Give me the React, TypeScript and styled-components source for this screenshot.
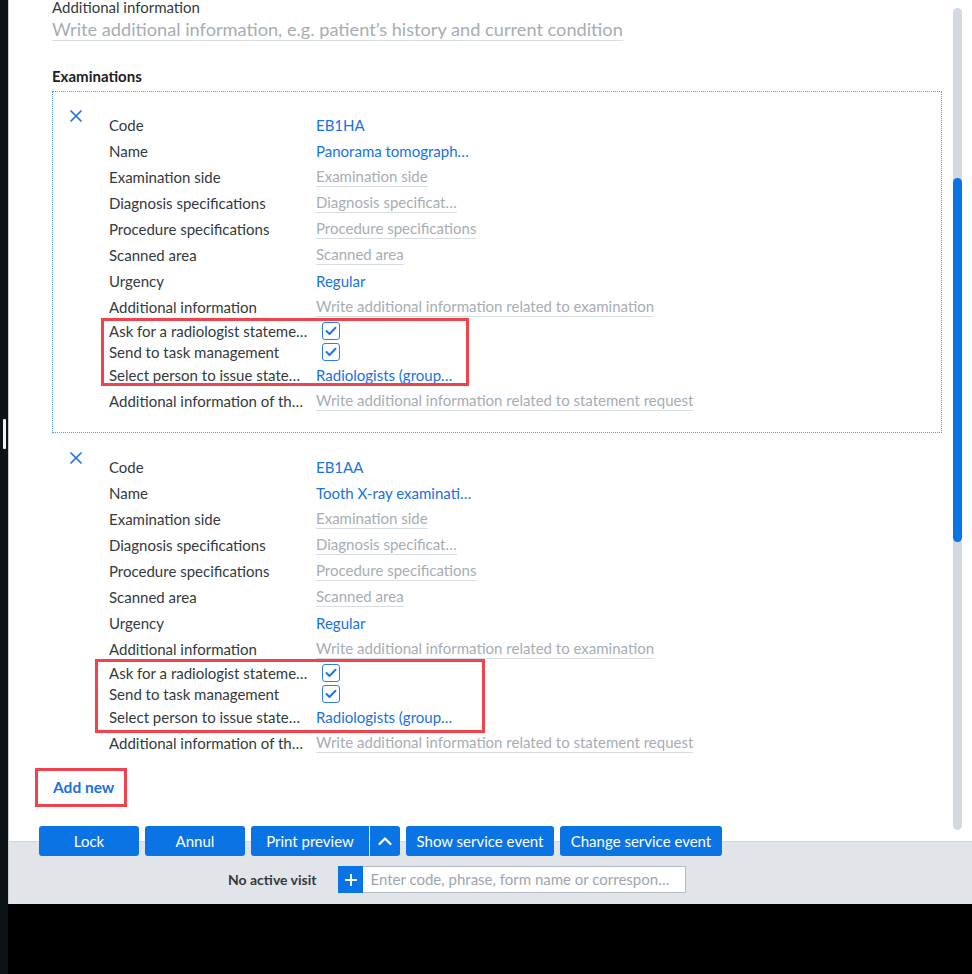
import React from "react";
import styled, { createGlobalStyle } from "styled-components";

const GlobalStyle = createGlobalStyle`
  html, body {
    margin: 0;
    padding: 0;
    background: #000;
  }
  body {
    font-family: "Segoe UI", Lato, "Noto Sans", sans-serif;
    -webkit-font-smoothing: antialiased;
  }
`;

const BLUE = "#0b74e5";
const LINK = "#1872e2";
const LABEL = "#333a40";
const PLACEHOLDER = "#a7adb4";
const UNDERLINE = "#d8dde2";

const Screen = styled.div`
  display: flex;
  align-items: flex-start;
  width: 972px;
  height: 974px;
  background: #000;
  overflow: hidden;
`;

const Rail = styled.div`
  width: 8px;
  height: 974px;
  box-sizing: border-box;
  padding-top: 419px;
  background: #0d1216;
  display: flex;
  justify-content: center;
`;

const RailHandle = styled.div`
  width: 3px;
  height: 30px;
  background: #f2f2f2;
  border-radius: 1px;
`;

const Window = styled.div`
  width: 964px;
  height: 904px;
  box-sizing: border-box;
  border-left: 1px solid #c9ced3;
  background: #fff;
  display: flex;
  flex-direction: column;
`;

const Content = styled.div`
  flex: 1;
  position: relative;
  overflow: hidden;
  padding: 0 30px 0 43px;
`;

const Inner = styled.div`
  margin-top: -3px;
`;

const FieldLabel = styled.div`
  font-size: 15px;
  line-height: 20px;
  color: ${LABEL};
`;

const BigPlaceholder = styled.div`
  display: inline-block;
  margin-top: 2px;
  font-size: 18.2px;
  line-height: 21px;
  color: ${PLACEHOLDER};
  border-bottom: 1px solid ${UNDERLINE};
`;

const SectionTitle = styled.div`
  margin: 25px 0 5px;
  font-size: 15px;
  line-height: 20px;
  font-weight: 700;
  color: #1d2125;
`;

const Card = styled.div<{ $active?: boolean }>`
  display: flex;
  padding: 20px 0 18px 17px;
  border: 1px dotted ${(p) => (p.$active ? "#4d9cf0" : "transparent")};
`;

const Close = styled.svg`
  flex: none;
  width: 12px;
  height: 12px;
  margin: -2px 27px 0 0;
`;

const Rows = styled.div`
  flex: 1;
  display: flex;
  flex-direction: column;
`;

const Row = styled.div<{ $h?: number }>`
  display: grid;
  grid-template-columns: 207px 1fr;
  align-items: center;
  height: ${(p) => p.$h ?? 26}px;
`;

const Label = styled.div`
  font-size: 15px;
  color: ${LABEL};
  white-space: nowrap;
  overflow: hidden;
`;

const Link = styled.div`
  font-size: 15px;
  color: ${LINK};
  white-space: nowrap;
`;

const Placeholder = styled.div`
  justify-self: start;
  font-size: 15px;
  line-height: 19px;
  color: ${PLACEHOLDER};
  border-bottom: 1px solid ${UNDERLINE};
  white-space: nowrap;
`;

const Check = styled.div`
  width: 18px;
  height: 18px;
  margin-left: 6px;
  box-sizing: border-box;
  border: 1.5px solid #2d7fe6;
  border-radius: 3px;
  background: #fff;
  display: flex;
  align-items: center;
  justify-content: center;
`;

const Group = styled.div`
  position: relative;
`;

const Mark = styled.div<{ $l: number; $t: number; $w: number; $h: number }>`
  position: absolute;
  left: ${(p) => p.$l}px;
  top: ${(p) => p.$t}px;
  width: ${(p) => p.$w}px;
  height: ${(p) => p.$h}px;
  box-sizing: border-box;
  border: 3px solid #f1434b;
  pointer-events: none;
`;

const AddWrap = styled.div`
  position: relative;
  display: inline-block;
  margin: 2px 0 0 1px;
`;

const AddNew = styled.div`
  font-size: 15.5px;
  line-height: 20px;
  font-weight: 700;
  color: ${LINK};
`;

const Track = styled.div`
  position: absolute;
  top: 8px;
  right: 10px;
  width: 9px;
  height: 822px;
  border-radius: 5px;
  background: #d2d9e0;
`;

const Thumb = styled.div`
  position: absolute;
  left: 0;
  right: 0;
  top: 170px;
  height: 364px;
  border-radius: 5px;
  background: ${BLUE};
`;

const Footer = styled.div`
  background: #e1e5e9;
  border-top: 1px solid #cfd5db;
  padding: 0 0 11px 30px;
`;

const ButtonRow = styled.div`
  position: relative;
  z-index: 1;
  display: flex;
  gap: 6px;
  margin-top: -16px;
`;

const Split = styled.div`
  display: flex;
  gap: 1px;
`;

const Button = styled.button<{ $w: number; $side?: "left" | "right" }>`
  width: ${(p) => p.$w}px;
  height: 30px;
  padding: 0;
  border: none;
  border-radius: ${(p) =>
    p.$side === "left" ? "3px 0 0 3px" : p.$side === "right" ? "0 3px 3px 0" : "3px"};
  background: ${BLUE};
  color: #fff;
  font-family: inherit;
  font-size: 15px;
  display: flex;
  align-items: center;
  justify-content: center;
  cursor: pointer;
`;

const VisitRow = styled.div`
  display: flex;
  align-items: center;
  height: 27px;
  margin-top: 10px;
  padding-left: 189px;
`;

const VisitText = styled.div`
  font-size: 14px;
  font-weight: 700;
  color: #34393e;
`;

const Search = styled.div`
  display: flex;
  width: 348px;
  height: 27px;
  margin-left: 22px;
`;

const PlusBox = styled.div`
  width: 25px;
  background: ${BLUE};
  display: flex;
  align-items: center;
  justify-content: center;
`;

const SearchField = styled.div`
  flex: 1;
  box-sizing: border-box;
  padding-left: 7px;
  background: #fff;
  border: 1px solid #b4bbc2;
  border-left: none;
  font-size: 15px;
  line-height: 25px;
  color: #a0a6ad;
  white-space: nowrap;
  overflow: hidden;
`;

type Field =
  | { label: string; kind: "link"; value: string }
  | { label: string; kind: "ph"; value: string }
  | { label: string; kind: "check" };

type Exam = {
  code: string;
  name: string;
  active?: boolean;
  mark: { l: number; t: number; w: number; h: number };
};

const exams: Exam[] = [
  { code: "EB1HA", name: "Panorama tomograph…", active: true, mark: { l: -8, t: -2, w: 368, h: 68 } },
  { code: "EB1AA", name: "Tooth X-ray examinati…", mark: { l: -14, t: -3, w: 390, h: 74 } },
];

const topFields = (e: Exam): Field[] => [
  { label: "Code", kind: "link", value: e.code },
  { label: "Name", kind: "link", value: e.name },
  { label: "Examination side", kind: "ph", value: "Examination side" },
  { label: "Diagnosis specifications", kind: "ph", value: "Diagnosis specificat…" },
  { label: "Procedure specifications", kind: "ph", value: "Procedure specifications" },
  { label: "Scanned area", kind: "ph", value: "Scanned area" },
  { label: "Urgency", kind: "link", value: "Regular" },
  { label: "Additional information", kind: "ph", value: "Write additional information related to examination" },
];

const statementFields: Field[] = [
  { label: "Ask for a radiologist stateme…", kind: "check" },
  { label: "Send to task management", kind: "check" },
  { label: "Select person to issue state…", kind: "link", value: "Radiologists (group…" },
];

const lastField: Field = {
  label: "Additional information of th…",
  kind: "ph",
  value: "Write additional information related to statement request",
};

const CheckIcon = () => (
  <svg width="12" height="10" viewBox="0 0 12 10">
    <path d="M1.5 5l3 3L10.5 1.8" fill="none" stroke="#1f78e6" strokeWidth="2" strokeLinecap="round" strokeLinejoin="round" />
  </svg>
);

const FieldRow = ({ f }: { f: Field }) => (
  <Row $h={f.kind === "check" ? 21 : 26}>
    <Label>{f.label}</Label>
    {f.kind === "link" && <Link>{f.value}</Link>}
    {f.kind === "ph" && <Placeholder>{f.value}</Placeholder>}
    {f.kind === "check" && (
      <Check>
        <CheckIcon />
      </Check>
    )}
  </Row>
);

const ExamCard = ({ exam }: { exam: Exam }) => (
  <Card $active={exam.active}>
    <Close viewBox="0 0 12 12">
      <path d="M1 1L11 11M11 1L1 11" stroke="#1a73e8" strokeWidth="1.7" strokeLinecap="round" />
    </Close>
    <Rows>
      {topFields(exam).map((f) => (
        <FieldRow key={f.label} f={f} />
      ))}
      <Group>
        {statementFields.map((f) => (
          <FieldRow key={f.label} f={f} />
        ))}
        <Mark $l={exam.mark.l} $t={exam.mark.t} $w={exam.mark.w} $h={exam.mark.h} />
      </Group>
      <FieldRow f={lastField} />
    </Rows>
  </Card>
);

const App = () => {
  return (
    <>
      <GlobalStyle />
      <Screen>
        <Rail>
          <RailHandle />
        </Rail>
        <Window>
          <Content>
            <Inner>
              <FieldLabel>Additional information</FieldLabel>
              <BigPlaceholder>Write additional information, e.g. patient’s history and current condition</BigPlaceholder>
              <SectionTitle>Examinations</SectionTitle>
              {exams.map((e) => (
                <ExamCard key={e.code} exam={e} />
              ))}
              <AddWrap>
                <AddNew>Add new</AddNew>
                <Mark $l={-18} $t={-9} $w={92} $h={39} />
              </AddWrap>
            </Inner>
            <Track>
              <Thumb />
            </Track>
          </Content>
          <Footer>
            <ButtonRow>
              <Button $w={100}>Lock</Button>
              <Button $w={100}>Annul</Button>
              <Split>
                <Button $w={118} $side="left">Print preview</Button>
                <Button $w={30} $side="right">
                  <svg width="16" height="16" viewBox="0 0 16 16">
                    <path d="M2.5 11L8 5.5L13.5 11" fill="none" stroke="#fff" strokeWidth="2.2" strokeLinecap="round" strokeLinejoin="round" />
                  </svg>
                </Button>
              </Split>
              <Button $w={148}>Show service event</Button>
              <Button $w={162}>Change service event</Button>
            </ButtonRow>
            <VisitRow>
              <VisitText>No active visit</VisitText>
              <Search>
                <PlusBox>
                  <svg width="14" height="14" viewBox="0 0 14 14">
                    <path d="M7 1V13M1 7H13" stroke="#fff" strokeWidth="1.8" />
                  </svg>
                </PlusBox>
                <SearchField>Enter code, phrase, form name or correspon…</SearchField>
              </Search>
            </VisitRow>
          </Footer>
        </Window>
      </Screen>
    </>
  );
};

export default App;
